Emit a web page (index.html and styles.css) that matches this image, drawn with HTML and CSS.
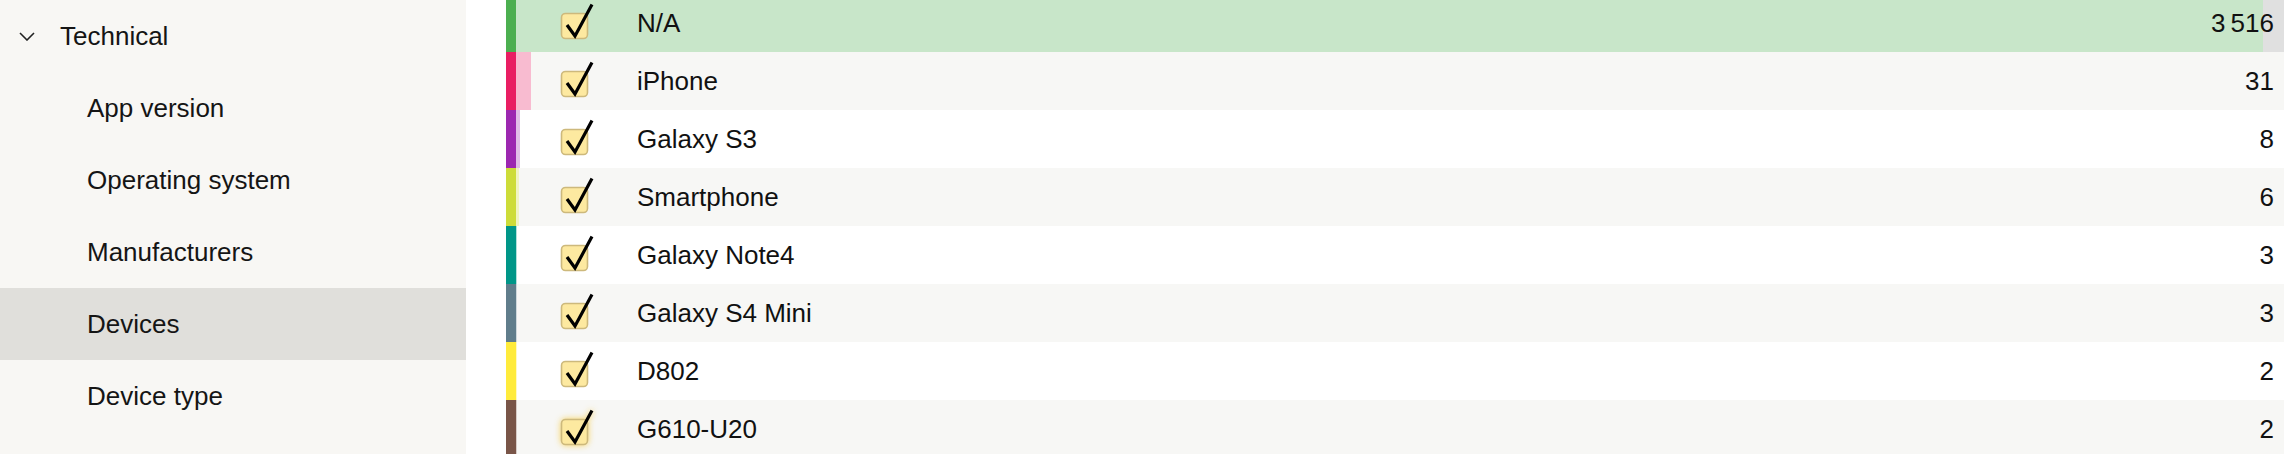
FILE: index.html
```html
<!DOCTYPE html>
<html lang="en">
<head>
<meta charset="utf-8">
<title>Devices</title>
<link rel="stylesheet" href="styles.css">
</head>
<body>
<div class="page">
  <nav class="sidebar">
    <div class="nav-group">
      <svg class="chevron" width="16" height="9" viewBox="0 0 16 9"><path d="M1 1 L8 8 L15 1" fill="none" stroke="#222" stroke-width="1.6"/></svg>
      <span>Technical</span>
    </div>
    <div class="nav-item">App version</div>
    <div class="nav-item">Operating system</div>
    <div class="nav-item">Manufacturers</div>
    <div class="nav-item nav-item--active">Devices</div>
    <div class="nav-item">Device type</div>
  </nav>
  <main class="main">
    <ul class="list">
      <li class="row row--track c-green">
        <span class="strip"></span>
        <div class="cell">
          <span class="fill" style="width:1747px"></span>
          <svg class="check" width="34" height="37" viewBox="0 0 34 37"><rect x="1.5" y="10.5" width="26" height="25" rx="4" class="box"/><path d="M7 22 L15 33 L32 1.5" class="tick"/></svg>
          <span class="label">N/A</span>
          <span class="count">3&thinsp;516</span>
        </div>
      </li>
      <li class="row row--alt c-pink">
        <span class="strip"></span>
        <div class="cell">
          <span class="fill" style="width:15px"></span>
          <svg class="check" width="34" height="37" viewBox="0 0 34 37"><rect x="1.5" y="10.5" width="26" height="25" rx="4" class="box"/><path d="M7 22 L15 33 L32 1.5" class="tick"/></svg>
          <span class="label">iPhone</span>
          <span class="count">31</span>
        </div>
      </li>
      <li class="row c-purple">
        <span class="strip"></span>
        <div class="cell">
          <span class="fill" style="width:4px"></span>
          <svg class="check" width="34" height="37" viewBox="0 0 34 37"><rect x="1.5" y="10.5" width="26" height="25" rx="4" class="box"/><path d="M7 22 L15 33 L32 1.5" class="tick"/></svg>
          <span class="label">Galaxy S3</span>
          <span class="count">8</span>
        </div>
      </li>
      <li class="row row--alt c-lime">
        <span class="strip"></span>
        <div class="cell">
          <span class="fill" style="width:3px"></span>
          <svg class="check" width="34" height="37" viewBox="0 0 34 37"><rect x="1.5" y="10.5" width="26" height="25" rx="4" class="box"/><path d="M7 22 L15 33 L32 1.5" class="tick"/></svg>
          <span class="label">Smartphone</span>
          <span class="count">6</span>
        </div>
      </li>
      <li class="row c-teal">
        <span class="strip"></span>
        <div class="cell">
          <span class="fill" style="width:1px"></span>
          <svg class="check" width="34" height="37" viewBox="0 0 34 37"><rect x="1.5" y="10.5" width="26" height="25" rx="4" class="box"/><path d="M7 22 L15 33 L32 1.5" class="tick"/></svg>
          <span class="label">Galaxy Note4</span>
          <span class="count">3</span>
        </div>
      </li>
      <li class="row row--alt c-bluegrey">
        <span class="strip"></span>
        <div class="cell">
          <span class="fill" style="width:1px"></span>
          <svg class="check" width="34" height="37" viewBox="0 0 34 37"><rect x="1.5" y="10.5" width="26" height="25" rx="4" class="box"/><path d="M7 22 L15 33 L32 1.5" class="tick"/></svg>
          <span class="label">Galaxy S4 Mini</span>
          <span class="count">3</span>
        </div>
      </li>
      <li class="row c-yellow">
        <span class="strip"></span>
        <div class="cell">
          <span class="fill" style="width:1px"></span>
          <svg class="check" width="34" height="37" viewBox="0 0 34 37"><rect x="1.5" y="10.5" width="26" height="25" rx="4" class="box"/><path d="M7 22 L15 33 L32 1.5" class="tick"/></svg>
          <span class="label">D802</span>
          <span class="count">2</span>
        </div>
      </li>
      <li class="row row--alt c-brown">
        <span class="strip"></span>
        <div class="cell">
          <span class="fill" style="width:1px"></span>
          <svg class="check check--focus" width="34" height="37" viewBox="0 0 34 37"><rect x="1.5" y="10.5" width="26" height="25" rx="4" class="box"/><path d="M7 22 L15 33 L32 1.5" class="tick"/></svg>
          <span class="label">G610-U20</span>
          <span class="count">2</span>
        </div>
      </li>
    </ul>
  </main>
</div>
</body>
</html>
```
FILE: styles.css
```css
* { box-sizing: border-box; }
html, body {
  margin: 0;
  padding: 0;
  background: #ffffff;
  height: 454px;
  overflow: hidden;
}
body {
  font-family: "Liberation Sans", Arial, sans-serif;
  font-size: 26px;
  color: #111111;
}
.page {
  display: flex;
  height: 454px;
}
.sidebar {
  width: 466px;
  flex: 0 0 466px;
  background: #f8f7f4;
  display: flex;
  flex-direction: column;
}
.nav-group {
  height: 72px;
  display: flex;
  align-items: center;
  padding-left: 19px;
  gap: 25px;
  color: #151515;
}
.chevron { flex: 0 0 16px; }
.nav-item {
  height: 72px;
  display: flex;
  align-items: center;
  padding-left: 87px;
  color: #151515;
}
.nav-item--active { background: #e0dfdb; }

.main {
  flex: 1 1 auto;
  padding-left: 40px;
  overflow: hidden;
}
.list {
  list-style: none;
  margin: -6px 0 0 0;
  padding: 0;
}
.row {
  display: flex;
  height: 58px;
  background: #ffffff;
}
.row--alt { background: #f7f7f5; }
.strip {
  flex: 0 0 10px;
  width: 10px;
}
.cell {
  position: relative;
  flex: 1 1 auto;
  display: flex;
  align-items: center;
  padding-left: 44px;
  padding-right: 10px;
}
.row--track .cell { background: #e0e0e0; }
.fill {
  position: absolute;
  left: 0;
  top: 0;
  bottom: 0;
}
.check {
  position: relative;
  flex: 0 0 34px;
  margin-bottom: 3px;
}
.box {
  fill: #fde9a0;
  stroke: #cdb97c;
  stroke-width: 1.6;
}
.check--focus { filter: drop-shadow(0 0 3px rgba(246, 206, 80, 0.9)); }
.tick {
  fill: none;
  stroke: #000000;
  stroke-width: 3.2;
  stroke-linejoin: miter;
  stroke-linecap: butt;
}
.label {
  position: relative;
  margin-left: 43px;
  flex: 1 1 auto;
}
.count {
  position: relative;
  text-align: right;
}

.c-green .strip { background: #4caf50; }
.c-green .fill { background: #c8e6c9; }
.c-pink .strip { background: #e91e63; }
.c-pink .fill { background: #f8bbd0; }
.c-purple .strip { background: #9c27b0; }
.c-purple .fill { background: #e1bee7; }
.c-lime .strip { background: #cddc39; }
.c-lime .fill { background: #f0f4c3; }
.c-teal .strip { background: #009688; }
.c-teal .fill { background: #b2dfdb; }
.c-bluegrey .strip { background: #607d8b; }
.c-bluegrey .fill { background: #cfd8dc; }
.c-yellow .strip { background: #ffeb3b; }
.c-yellow .fill { background: #fff9c4; }
.c-brown .strip { background: #795548; }
.c-brown .fill { background: #d7ccc8; }
```
